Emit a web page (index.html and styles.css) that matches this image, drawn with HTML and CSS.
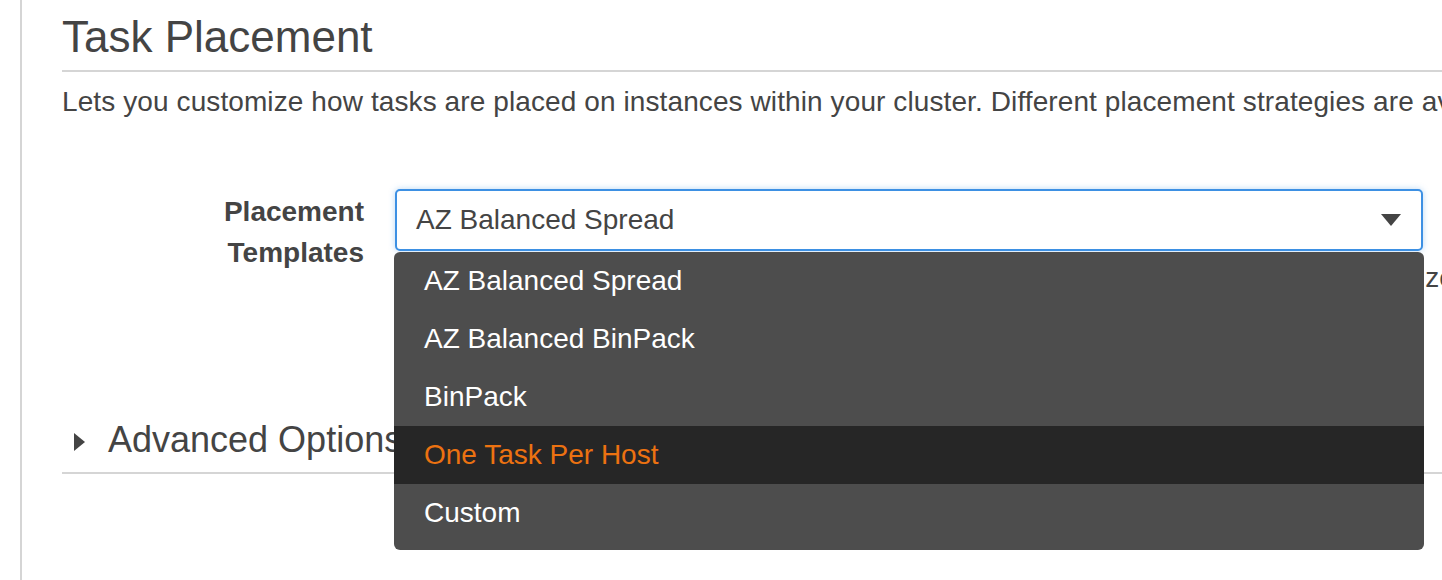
FILE: index.html
```html
<!DOCTYPE html>
<html>
<head>
<meta charset="utf-8">
<link rel="stylesheet" href="styles.css">
</head>
<body>
<div class="rail">
  <section class="section">
    <h1 class="title">Task Placement</h1>
    <p class="desc">Lets you customize how tasks are placed on instances within your cluster. Different placement strategies are available to optimize for availability and efficiency.</p>
    <div class="form-row">
      <div class="field-label">Placement<br>Templates</div>
      <div class="field">
        <div class="select-wrap">
          <div class="select">
            <span class="select-value">AZ Balanced Spread</span>
            <span class="caret"></span>
          </div>
          <ul class="menu">
            <li class="menu-item">AZ Balanced Spread</li>
            <li class="menu-item">AZ Balanced BinPack</li>
            <li class="menu-item">BinPack</li>
            <li class="menu-item is-active">One Task Per Host</li>
            <li class="menu-item">Custom</li>
          </ul>
        </div>
        <div class="help">This template will spread tasks across availability zones and within the availability zones. For each zone, tasks spread.</div>
      </div>
    </div>
    <div class="advanced">
      <span class="adv-caret"></span>
      <span class="adv-title">Advanced Options</span>
    </div>
  </section>
</div>
</body>
</html>
```

FILE: styles.css
```css
html, body {
  margin: 0;
  padding: 0;
  background: #fff;
  overflow: hidden;
}
body {
  font-family: "Liberation Sans", Arial, Helvetica, sans-serif;
  color: #444;
  width: 1442px;
  height: 580px;
}
.rail {
  margin-left: 20px;
  border-left: 2px solid #d5d5d5;
  padding-left: 40px;
  height: 580px;
  box-sizing: border-box;
}
.section {
  width: 1500px;
}
.title {
  margin: 0;
  padding-top: 12px;
  padding-bottom: 8px;
  font-size: 44px;
  line-height: 50px;
  font-weight: normal;
  color: #444;
  border-bottom: 2px solid #d5d5d5;
}
.desc {
  margin: 10px 0 0;
  font-size: 28px;
  line-height: 40px;
  white-space: nowrap;
  letter-spacing: 0.1px;
}
.form-row {
  display: flex;
  margin-top: 67px;
  height: 228px;
}
.field-label {
  width: 302px;
  text-align: right;
  font-weight: bold;
  font-size: 28px;
  line-height: 41px;
  padding-top: 2px;
  box-sizing: border-box;
}
.field {
  margin-left: 31px;
  width: 1100px;
}
.select-wrap {
  position: relative;
  width: 1028px;
}
.select {
  height: 62px;
  box-sizing: border-box;
  border: 2px solid #3d90e3;
  border-radius: 5px;
  box-shadow: 0 0 6px rgba(61, 144, 227, 0.35);
  display: flex;
  align-items: center;
  justify-content: space-between;
  padding: 0 20px 0 19px;
  background: #fff;
}
.select-value {
  font-size: 28px;
  line-height: 58px;
}
.caret {
  width: 0;
  height: 0;
  border-left: 10.5px solid transparent;
  border-right: 10.5px solid transparent;
  border-top: 12px solid #444;
}
.menu {
  position: absolute;
  left: -1px;
  right: -1px;
  top: calc(100% + 1px);
  margin: 0;
  padding: 0 0 8px;
  list-style: none;
  background: #4d4d4d;
  border-radius: 6px;
  z-index: 2;
}
.menu-item {
  height: 58px;
  line-height: 58px;
  padding-left: 30px;
  font-size: 28px;
  color: #fff;
}
.menu-item.is-active {
  background: #262626;
  color: #ec7211;
}
.help {
  margin-top: 9px;
  padding-left: 14px;
  font-size: 28px;
  line-height: 36px;
  white-space: nowrap;
  color: #444;
}
.advanced {
  display: flex;
  align-items: center;
  padding-left: 12px;
  padding-top: 0;
  height: 46px;
  padding-bottom: 9px;
  border-bottom: 2px solid #d5d5d5;
}
.adv-caret {
  width: 0;
  height: 0;
  border-top: 9px solid transparent;
  border-bottom: 9px solid transparent;
  border-left: 11px solid #444;
  margin-right: 23px;
  margin-top: 4px;
}
.adv-title {
  font-size: 36px;
  line-height: 46px;
}
```
